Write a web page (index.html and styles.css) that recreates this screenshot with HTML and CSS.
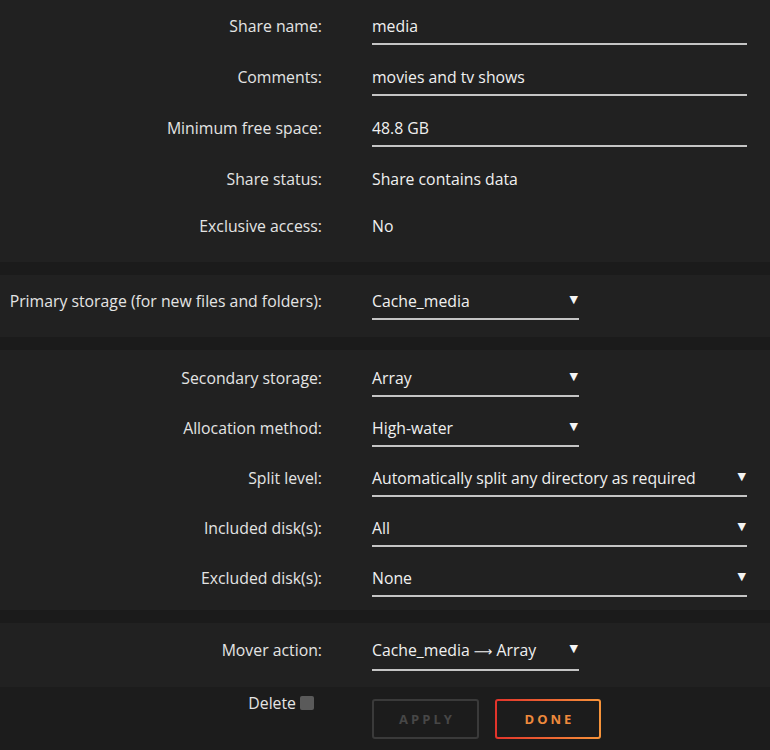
FILE: index.html
```html
<!DOCTYPE html>
<html lang="en">
<head>
    <meta charset="UTF-8">
    <meta name="viewport" content="width=device-width, initial-scale=1.0">
    <title>Share Settings</title>
    <link rel="stylesheet" href="styles.css">
</head>
<body>
    <div class="section section-main">
        <div class="row">
            <div class="label">Share name:</div>
            <div class="field">media</div>
        </div>
        <div class="row">
            <div class="label">Comments:</div>
            <div class="field">movies and tv shows</div>
        </div>
        <div class="row">
            <div class="label">Minimum free space:</div>
            <div class="field">48.8 GB</div>
        </div>
        <div class="row row-static">
            <div class="label">Share status:</div>
            <div class="value">Share contains data</div>
        </div>
        <div class="row row-static">
            <div class="label">Exclusive access:</div>
            <div class="value">No</div>
        </div>
    </div>

    <div class="section section-primary">
        <div class="row">
            <div class="label">Primary storage (for new files and folders):</div>
            <div class="field select short">Cache_media<span class="arrow">▼</span></div>
        </div>
    </div>

    <div class="section section-secondary">
        <div class="row row-tight">
            <div class="label">Secondary storage:</div>
            <div class="field select short">Array<span class="arrow">▼</span></div>
        </div>
        <div class="row row-tight">
            <div class="label">Allocation method:</div>
            <div class="field select short">High-water<span class="arrow">▼</span></div>
        </div>
        <div class="row row-tight">
            <div class="label">Split level:</div>
            <div class="field select">Automatically split any directory as required<span class="arrow">▼</span></div>
        </div>
        <div class="row row-tight">
            <div class="label">Included disk(s):</div>
            <div class="field select">All<span class="arrow">▼</span></div>
        </div>
        <div class="row row-tight">
            <div class="label">Excluded disk(s):</div>
            <div class="field select">None<span class="arrow">▼</span></div>
        </div>
    </div>

    <div class="section section-mover">
        <div class="row">
            <div class="label">Mover action:</div>
            <div class="field select short">Cache_media <span class="to">⟶</span> Array<span class="arrow">▼</span></div>
        </div>
    </div>

    <div class="footer">
        <div class="delete">
            Delete <span class="checkbox"></span>
        </div>
        <div class="buttons">
            <button class="btn btn-apply" disabled>APPLY</button>
            <button class="btn btn-done">DONE</button>
        </div>
    </div>
</body>
</html>
```

FILE: styles.css
```css
body {
    margin: 0;
    background: #1b1b1b;
    font-family: "Open Sans", "Noto Sans", sans-serif;
    font-size: 15.8px;
    color: #e4e4e4;
}

.section {
    background: #212121;
    margin-bottom: 13px;
}

.section-main {
    padding: 0 0 15px;
}

.section-primary {
    padding: 0 0 11px;
}

.section-secondary {
    padding: 2px 0 8px;
}

.section-mover {
    padding: 1px 0 12px;
    margin-bottom: 0;
}

.row {
    display: flex;
    align-items: flex-start;
    height: 51px;
}

.row-tight {
    height: 50px;
}

.row-static {
    height: 47px;
}

.label {
    width: 322px;
    flex-shrink: 0;
    text-align: right;
    padding-top: 16px;
    line-height: 20px;
    white-space: nowrap;
}

.value {
    margin-left: 50px;
    padding-top: 16px;
    line-height: 20px;
    color: #f0f0f0;
}

.field {
    margin-left: 50px;
    width: 375px;
    padding: 16px 0 7px;
    line-height: 20px;
    color: #f0f0f0;
    border-bottom: 2px solid #c4c4c4;
    white-space: nowrap;
}

.select {
    position: relative;
}

.short {
    width: 207px;
}

.to {
    font-family: "DejaVu Sans", sans-serif;
    font-size: 13px;
}

.arrow {
    position: absolute;
    right: 1px;
    top: 15px;
    font-family: "DejaVu Sans", sans-serif;
    font-size: 11px;
    color: #f4f4f4;
}

.footer {
    display: flex;
    align-items: flex-start;
    height: 63px;
    background: #1c1c1c;
}

.delete {
    width: 314px;
    padding-top: 6px;
    line-height: 20px;
    display: flex;
    align-items: center;
    justify-content: flex-end;
    gap: 4px;
}

.checkbox {
    width: 14px;
    height: 14px;
    border-radius: 2px;
    background: #5a5a5a;
}

.buttons {
    margin-left: 58px;
    padding-top: 12px;
    display: flex;
    gap: 16px;
}

.btn {
    width: 107px;
    height: 40px;
    font-family: "Open Sans", "Noto Sans", sans-serif;
    font-size: 13px;
    font-weight: 700;
    letter-spacing: 3px;
    border-radius: 3px;
    padding: 0 0 0 3px;
    cursor: pointer;
}

.btn-apply {
    background: transparent;
    border: 2px solid #3a3a3a;
    color: #474747;
}

.btn-done {
    width: 106px;
    color: #ee8a3c;
    border: 2px solid transparent;
    background:
        linear-gradient(#1c1c1c, #1c1c1c) padding-box,
        linear-gradient(to right, #e2332b, #f7943a) border-box;
}
```
